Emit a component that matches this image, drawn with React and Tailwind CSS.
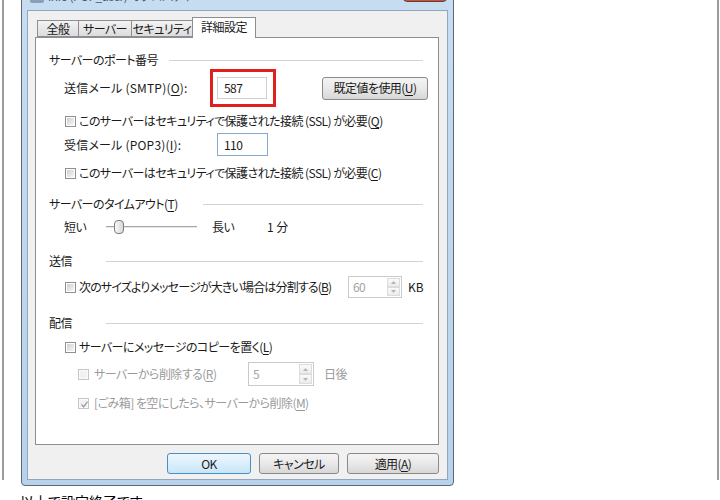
import React from 'react';

// mnemonic letter, underlined like a Windows accelerator key
const K = ({ c }) => <span className="underline underline-offset-[2px] decoration-1">{c}</span>;

const Check = ({ disabled, checked }) => (
  <span
    className={`relative flex h-[11px] w-[11px] shrink-0 items-center justify-center border ${
      disabled ? 'border-[#c6c6c6] bg-[#fafafa]' : 'border-[#8e8f8f] bg-white'
    }`}
  >
    <span className={`h-[7px] w-[7px] ${disabled ? 'bg-[#f1f1f1]' : 'bg-gradient-to-br from-[#cdd0d4] to-[#f7f7f7]'}`} />
    {checked && (
      <svg className="absolute left-[1px] top-[1px]" width="9" height="9" viewBox="0 0 9 9">
        <path d="M1.5 4.5 L3.6 6.8 L7.6 1.6" fill="none" stroke="#a3a3a3" strokeWidth="1.4" />
      </svg>
    )}
  </span>
);

const Group = ({ title, w, mt }) => (
  <div className={`flex h-[16px] items-center ${mt}`}>
    <span className={`${w} shrink-0 whitespace-nowrap`}>{title}</span>
    <span className="h-px flex-1 bg-[#d3d3d3]" />
  </div>
);

const Arrow = ({ up }) => (
  <span className="flex flex-1 items-center justify-center border border-[#dcdcdc] bg-gradient-to-b from-[#fafafa] to-[#ececec]">
    <svg width="5" height="3" viewBox="0 0 5 3">
      <path d={up ? 'M0 3 L2.5 0 L5 3 Z' : 'M0 0 L2.5 3 L5 0 Z'} fill="#b4b4b4" />
    </svg>
  </span>
);

const Spin = ({ value, w }) => (
  <div className={`flex h-full shrink-0 ${w} border border-[#cacaca] bg-white`}>
    <span className="flex flex-1 items-center pl-[4px] text-[#a2a2a2]">{value}</span>
    <span className="flex w-[15px] flex-col p-px">
      <Arrow up />
      <Arrow />
    </span>
  </div>
);

const Button = ({ children, w, focus }) => (
  <div
    className={`flex h-full shrink-0 ${w} items-center justify-center whitespace-nowrap rounded-[3px] border ${
      focus
        ? 'border-[#4a8fc4] bg-gradient-to-b from-[#eef7fd] via-[#dbeffb] to-[#c6e6f8]'
        : 'border-[#8a8a8a] bg-gradient-to-b from-[#f4f4f4] via-[#e9e9e9] to-[#d7d7d7]'
    }`}
  >
    {children}
  </div>
);

const Tab = ({ label, w, selected }) => (
  <div
    className={`-ml-px flex shrink-0 ${w} items-center justify-center whitespace-nowrap border border-[#8c8e94] ${
      selected
        ? 'relative z-10 mb-[-1px] h-[21px] border-b-0 bg-white pb-[2px]'
        : 'h-[17px] bg-gradient-to-b from-[#f3f3f3] to-[#dcdcdc]'
    }`}
  >
    {label}
  </div>
);

export default function App() {
  return (
    <div className="h-[500px] w-[720px] overflow-hidden bg-white text-[12px] leading-none tracking-[-0.55px] text-[#1a1a1a] font-['Noto_Sans_CJK_JP','Noto_Sans',sans-serif] [font-feature-settings:'palt']">
      <div className="ml-[2px] h-full w-[717px] border-x-2 border-[#9c9c9c]">
        {/* dialog window, title bar cut off at the top */}
        <div className="-mt-[20px] ml-[17px] w-[433px] rounded-b-[4px] border border-[#5f6770] bg-gradient-to-b from-[#c6ddf2] to-[#b8d2ec] px-[5px] pb-[5px]">
          <div className="flex h-[29px]">
            <div className="flex flex-1 items-center gap-[4px] pl-[3px] pt-[1px] text-[#4e5a66]">
              <span className="h-[14px] w-[14px] rounded-[2px] bg-[#8aa0b8]" />
              <span>info (POP_user) のプロパティ</span>
            </div>
            <div className="mr-[1px] h-[21px] w-[44px] rounded-b-[4px] border border-[#6b3a30] bg-gradient-to-b from-[#e0a38f] to-[#c0523c]" />
          </div>

          <div className="h-[470px] border border-[#93a6bb] bg-[#f0f0f0] px-[7px]">
            <div className="flex h-[26px] items-end pl-[3px]">
              <Tab label="全般" w="w-[42px]" />
              <Tab label="サーバー" w="w-[54px]" />
              <Tab label="セキュリティ" w="w-[62px]" />
              <Tab label="詳細設定" w="w-[64px]" selected />
            </div>

            <div className="flex h-[408px] w-[404px] flex-col border border-[#8c8e94] bg-white pl-[13px] pr-[15px] pt-[14px]">
              <Group title="サーバーのポート番号" w="w-[120px]" />

              <div className="mt-[1px] flex h-[38px] items-center pl-[15px]">
                <span className="w-[146px] shrink-0 whitespace-nowrap tracking-[0.2px]">
                  送信メール (SMTP)(<K c="O" />):
                </span>
                <div className="flex h-[38px] w-[66px] shrink-0 items-center border-[3px] border-[#e0201b] pl-[4px]">
                  <div className="flex h-[22px] w-[50px] items-center border border-[#c9d1db] pl-[6px]">587</div>
                </div>
                <div className="ml-[46px] h-[23px] shrink-0">
                  <Button w="w-[106px]">
                    既定値を使用(<K c="U" />)
                  </Button>
                </div>
              </div>

              <div className="mt-[6px] flex h-[16px] items-center gap-[3px] whitespace-nowrap pl-[16px]">
                <Check />
                <span>
                  このサーバーはセキュリティで保護された接続 (SSL) が必要(<K c="Q" />)
                </span>
              </div>

              <div className="mt-[4px] flex h-[23px] items-center pl-[15px]">
                <span className="w-[153px] shrink-0 whitespace-nowrap tracking-[0.2px]">
                  受信メール (POP3)(<K c="I" />):
                </span>
                <div className="flex h-[23px] w-[51px] shrink-0 items-center border border-[#88a9cf] pl-[6px]">110</div>
              </div>

              <div className="mt-[9px] flex h-[16px] items-center gap-[3px] whitespace-nowrap pl-[16px]">
                <Check />
                <span>
                  このサーバーはセキュリティで保護された接続 (SSL) が必要(<K c="C" />)
                </span>
              </div>

              <Group
                title={
                  <>
                    サーバーのタイムアウト(<K c="T" />)
                  </>
                }
                w="w-[154px]"
                mt="mt-[15px]"
              />

              <div className="mt-[7px] flex h-[16px] items-center pl-[15px]">
                <span className="w-[42px] shrink-0">短い</span>
                <svg width="92" height="16" viewBox="0 0 92 16" className="shrink-0">
                  <line x1="0" y1="7.5" x2="91" y2="7.5" stroke="#a8a8a8" />
                  <line x1="0" y1="8.5" x2="91" y2="8.5" stroke="#e6e6e6" />
                  <defs>
                    <linearGradient id="thumb" x1="0" y1="0" x2="1" y2="0">
                      <stop offset="0" stopColor="#fbfbfb" />
                      <stop offset="1" stopColor="#d6d6d6" />
                    </linearGradient>
                  </defs>
                  <rect x="8.5" y="1.5" width="9" height="13" rx="3.5" fill="url(#thumb)" stroke="#7c7c7c" />
                </svg>
                <span className="ml-[14px] w-[55px] shrink-0">長い</span>
                <span className="whitespace-pre tracking-normal">1 分</span>
              </div>

              <Group title="送信" w="w-[57px]" mt="mt-[18px]" />

              <div className="mt-[7px] flex h-[22px] items-center pl-[16px]">
                <Check />
                <span className="ml-[3px] w-[269px] shrink-0 whitespace-nowrap tracking-[-0.85px]">
                  次のサイズよりメッセージが大きい場合は分割する(<K c="B" />)
                </span>
                <Spin value="60" w="w-[54px]" />
                <span className="ml-[6px] tracking-normal">KB</span>
              </div>

              <Group title="配信" w="w-[57px]" mt="mt-[17px]" />

              <div className="mt-[8px] flex h-[16px] items-center gap-[3px] whitespace-nowrap pl-[16px]">
                <Check />
                <span>
                  サーバーにメッセージのコピーを置く(<K c="L" />)
                </span>
              </div>

              <div className="mt-[7px] flex h-[24px] items-center pl-[29px] text-[#9a9a9a]">
                <Check disabled />
                <span className="ml-[5px] w-[154px] shrink-0 whitespace-nowrap">
                  サーバーから削除する(<K c="R" />)
                </span>
                <Spin value="5" w="w-[66px]" />
                <span className="ml-[10px]">日後</span>
              </div>

              <div className="mt-[9px] flex h-[16px] items-center gap-[5px] whitespace-nowrap pl-[29px] text-[#9a9a9a]">
                <Check disabled checked />
                <span>
                  [ごみ箱] を空にしたら、サーバーから削除(<K c="M" />)
                </span>
              </div>
            </div>

            <div className="mt-[8px] flex h-[21px] justify-end gap-[8px] pr-[1px]">
              <Button w="w-[84px]" focus>
                OK
              </Button>
              <Button w="w-[80px]">キャンセル</Button>
              <Button w="w-[92px]">
                適用(<K c="A" />)
              </Button>
            </div>
          </div>
        </div>

        <p className="ml-[16px] mt-[5px] text-[14px] leading-[20px] tracking-normal text-black">以上で設定終了です。</p>
      </div>
    </div>
  );
}
